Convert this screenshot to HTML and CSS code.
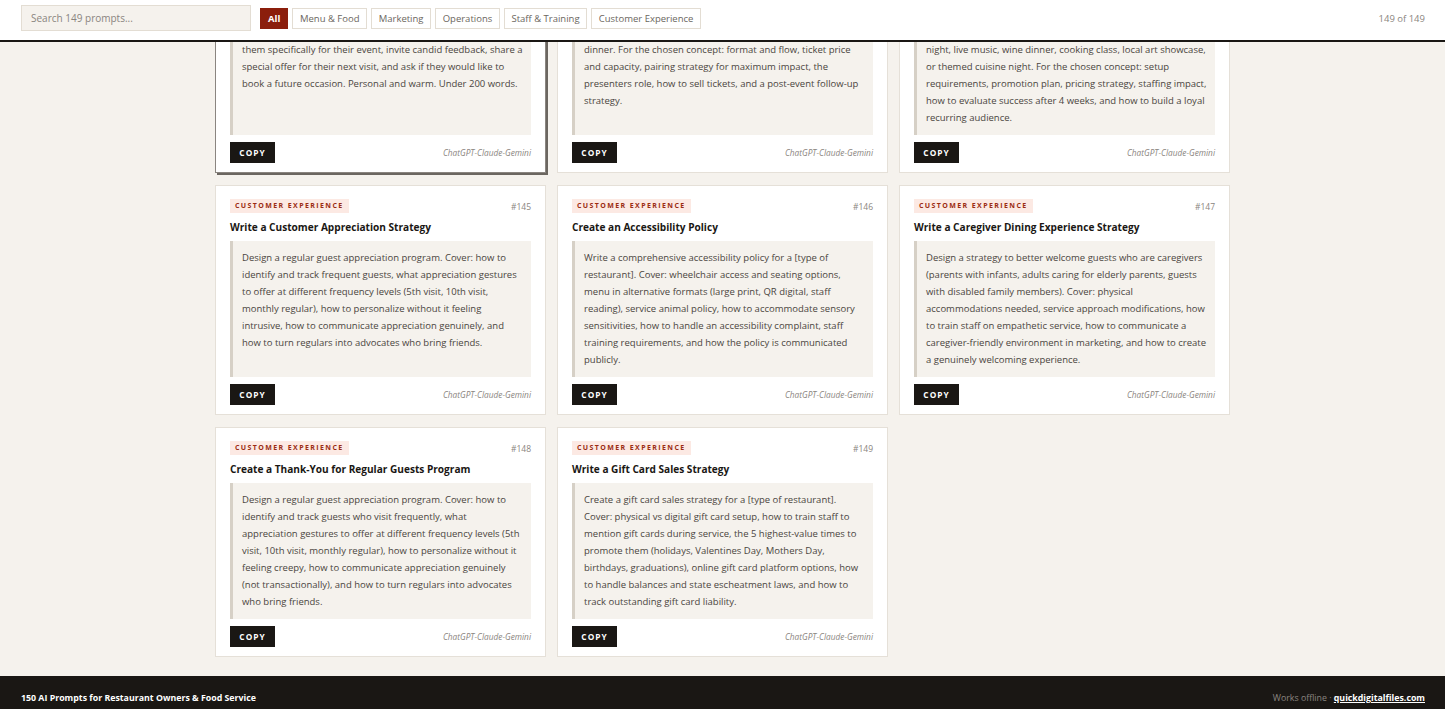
FILE: index.html
```html
<!DOCTYPE html>
<html lang="en">
<head>
    <meta charset="UTF-8">
    <meta name="viewport" content="width=device-width, initial-scale=1.0">
    <title>150 AI Prompts for Restaurant Owners &amp; Food Service</title>
    <link rel="stylesheet" href="styles.css">
</head>
<body>
    <header class="topbar">
        <input class="search" type="text" placeholder="Search 149 prompts...">
        <nav class="filters">
            <button class="filter active">All</button>
            <button class="filter">Menu &amp; Food</button>
            <button class="filter">Marketing</button>
            <button class="filter">Operations</button>
            <button class="filter">Staff &amp; Training</button>
            <button class="filter">Customer Experience</button>
        </nav>
        <div class="count">149 of 149</div>
    </header>

    <main class="scroller">
        <div class="grid">
            <div class="card is-hover">
                <div class="card-head">
                    <span class="tag">Customer Experience</span>
                    <span class="num">#142</span>
                </div>
                <h3 class="card-title">Write a Private Event Follow-Up Message</h3>
                <div class="prompt">Write a personal follow-up message for a guest who has<br>just hosted a private event at a [type of restaurant]. Thank<br>them specifically for their event, invite candid feedback, share a special offer for their next visit, and ask if they would like to book a future occasion. Personal and warm. Under 200 words.</div>
                <div class="card-foot">
                    <button class="copy">Copy</button>
                    <span class="works">ChatGPT-Claude-Gemini</span>
                </div>
            </div>
            <div class="card">
                <div class="card-head">
                    <span class="tag">Customer Experience</span>
                    <span class="num">#143</span>
                </div>
                <h3 class="card-title">Plan a Ticketed Tasting Event</h3>
                <div class="prompt">Plan a ticketed tasting event for a [type of restaurant].<br>Suggest a wine flight, beer pairing, or a chef's table<br>dinner. For the chosen concept: format and flow, ticket price and capacity, pairing strategy for maximum impact, the presenters role, how to sell tickets, and a post-event follow-up strategy.</div>
                <div class="card-foot">
                    <button class="copy">Copy</button>
                    <span class="works">ChatGPT-Claude-Gemini</span>
                </div>
            </div>
            <div class="card">
                <div class="card-head">
                    <span class="tag">Customer Experience</span>
                    <span class="num">#144</span>
                </div>
                <h3 class="card-title">Design a Recurring Event Night</h3>
                <div class="prompt">Design a recurring event to fill slow nights at a [type of<br>restaurant]. Suggest options such as a pub quiz or trivia<br>night, live music, wine dinner, cooking class, local art showcase, or themed cuisine night. For the chosen concept: setup requirements, promotion plan, pricing strategy, staffing impact, how to evaluate success after 4 weeks, and how to build a loyal recurring audience.</div>
                <div class="card-foot">
                    <button class="copy">Copy</button>
                    <span class="works">ChatGPT-Claude-Gemini</span>
                </div>
            </div>

            <div class="card">
                <div class="card-head">
                    <span class="tag">Customer Experience</span>
                    <span class="num">#145</span>
                </div>
                <h3 class="card-title">Write a Customer Appreciation Strategy</h3>
                <div class="prompt">Design a regular guest appreciation program. Cover: how to identify and track frequent guests, what appreciation gestures to offer at different frequency levels (5th visit, 10th visit, monthly regular), how to personalize without it feeling intrusive, how to communicate appreciation genuinely, and how to turn regulars into advocates who bring friends.</div>
                <div class="card-foot">
                    <button class="copy">Copy</button>
                    <span class="works">ChatGPT-Claude-Gemini</span>
                </div>
            </div>
            <div class="card">
                <div class="card-head">
                    <span class="tag">Customer Experience</span>
                    <span class="num">#146</span>
                </div>
                <h3 class="card-title">Create an Accessibility Policy</h3>
                <div class="prompt">Write a comprehensive accessibility policy for a [type of restaurant]. Cover: wheelchair access and seating options, menu in alternative formats (large print, QR digital, staff reading), service animal policy, how to accommodate sensory sensitivities, how to handle an accessibility complaint, staff training requirements, and how the policy is communicated publicly.</div>
                <div class="card-foot">
                    <button class="copy">Copy</button>
                    <span class="works">ChatGPT-Claude-Gemini</span>
                </div>
            </div>
            <div class="card">
                <div class="card-head">
                    <span class="tag">Customer Experience</span>
                    <span class="num">#147</span>
                </div>
                <h3 class="card-title">Write a Caregiver Dining Experience Strategy</h3>
                <div class="prompt">Design a strategy to better welcome guests who are caregivers (parents with infants, adults caring for elderly parents, guests with disabled family members). Cover: physical accommodations needed, service approach modifications, how to train staff on empathetic service, how to communicate a caregiver-friendly environment in marketing, and how to create a genuinely welcoming experience.</div>
                <div class="card-foot">
                    <button class="copy">Copy</button>
                    <span class="works">ChatGPT-Claude-Gemini</span>
                </div>
            </div>

            <div class="card">
                <div class="card-head">
                    <span class="tag">Customer Experience</span>
                    <span class="num">#148</span>
                </div>
                <h3 class="card-title">Create a Thank-You for Regular Guests Program</h3>
                <div class="prompt">Design a regular guest appreciation program. Cover: how to identify and track guests who visit frequently, what appreciation gestures to offer at different frequency levels (5th visit, 10th visit, monthly regular), how to personalize without it feeling creepy, how to communicate appreciation genuinely (not transactionally), and how to turn regulars into advocates who bring friends.</div>
                <div class="card-foot">
                    <button class="copy">Copy</button>
                    <span class="works">ChatGPT-Claude-Gemini</span>
                </div>
            </div>
            <div class="card">
                <div class="card-head">
                    <span class="tag">Customer Experience</span>
                    <span class="num">#149</span>
                </div>
                <h3 class="card-title">Write a Gift Card Sales Strategy</h3>
                <div class="prompt">Create a gift card sales strategy for a [type of restaurant]. Cover: physical vs digital gift card setup, how to train staff to mention gift cards during service, the 5 highest-value times to promote them (holidays, Valentines Day, Mothers Day, birthdays, graduations), online gift card platform options, how to handle balances and state escheatment laws, and how to track outstanding gift card liability.</div>
                <div class="card-foot">
                    <button class="copy">Copy</button>
                    <span class="works">ChatGPT-Claude-Gemini</span>
                </div>
            </div>
        </div>
    </main>

    <footer class="footer">
        <span class="footer-title">150 AI Prompts for Restaurant Owners &amp; Food Service</span>
        <span class="footer-note">Works offline · <a href="#">quickdigitalfiles.com</a></span>
    </footer>
</body>
</html>
```

FILE: styles.css
```css
* {
    margin: 0;
    padding: 0;
    box-sizing: border-box;
}
html, body {
    height: 100%;
}
body {
    background: #f5f2ed;
    color: #1a1714;
    font-family: 'Open Sans', 'Liberation Sans', sans-serif;
    display: flex;
    flex-direction: column;
    overflow: hidden; /* page is shown scrolled to the end */
}

/* Top bar */
.topbar {
    display: flex;
    align-items: center;
    padding: 5px 20px 9px 21px;
    background: #fff;
    border-bottom: 2px solid #1a1714;
    position: relative;
    z-index: 10;
}
.search {
    width: 230px;
    height: 26px;
    padding: 0 9px;
    background: #f5f2ed;
    border: 1px solid #e3ddd3;
    font-family: inherit;
    font-size: 10px;
    color: #333;
    outline: none;
}
.search::placeholder {
    color: #8a8580;
}
.filters {
    display: flex;
    gap: 4px;
    margin-left: 9px;
}
.filter {
    display: inline-flex;
    align-items: center;
    height: 21px;
    padding: 0 6.6px;
    background: #fff;
    border: 1px solid #e3ddd3;
    font-family: inherit;
    font-size: 9.5px;
    color: #6b6660;
    cursor: pointer;
}
.filter.active {
    padding: 0 7px;
    background: #8b1e0c;
    border-color: #8b1e0c;
    color: #fff;
    font-weight: 700;
}
.count {
    margin-left: auto;
    font-size: 9.5px;
    color: #8a8580;
}

/* Scrolled list - content is pinned to the bottom */
.scroller {
    flex: 1;
    min-height: 0;
    overflow: hidden;
    display: flex;
    flex-direction: column;
    justify-content: flex-end;
}
.grid {
    width: 1015px;
    margin: 0 auto;
    padding-bottom: 19px;
    display: grid;
    grid-template-columns: repeat(3, 1fr);
    gap: 12px 11px;
    flex-shrink: 0;
}

/* Card */
.card {
    background: #fff;
    border: 1px solid #e5e0d8;
    padding: 13px 14px 9px;
    display: flex;
    flex-direction: column;
}
.card.is-hover {
    border-color: #8a8580;
    box-shadow: 2px 2px 0 #6b6660;
}
.card-head {
    display: flex;
    justify-content: space-between;
    align-items: center;
}
.tag {
    background: #fce9e3;
    color: #9b2c12;
    font-size: 7px;
    font-weight: 700;
    letter-spacing: 1.4px;
    text-transform: uppercase;
    padding: 2px 5px;
    line-height: 10px;
}
.num {
    font-size: 8.5px;
    color: #8a8580;
}
.card-title {
    font-size: 10.1px;
    font-weight: 700;
    color: #1a1714;
    margin: 7px 0;
    line-height: 14px;
}
.prompt {
    flex: 1;
    background: #f5f2ed;
    border-left: 3px solid #d6d0c6;
    padding: 8px 7px 9px 9px;
    font-size: 9.5px;
    line-height: 17px;
    color: #4a4540;
}
.card-foot {
    display: flex;
    justify-content: space-between;
    align-items: center;
    margin-top: 7px;
}
.copy {
    background: #1a1714;
    color: #fff;
    border: none;
    font-family: inherit;
    font-size: 8.3px;
    font-weight: 700;
    letter-spacing: 1px;
    text-transform: uppercase;
    width: 45px;
    height: 21px;
    cursor: pointer;
}
.works {
    font-size: 8.3px;
    font-style: italic;
    color: #8a8580;
}

/* Footer */
.footer {
    display: flex;
    justify-content: space-between;
    align-items: center;
    background: #1a1714;
    padding: 15px 20px 4px 21px;
    height: 33px;
    font-size: 8.8px;
}
.footer-title {
    color: #fff;
    font-weight: 700;
}
.footer-note {
    color: #8a8580;
}
.footer-note a {
    color: #fff;
    font-weight: 700;
}
```
